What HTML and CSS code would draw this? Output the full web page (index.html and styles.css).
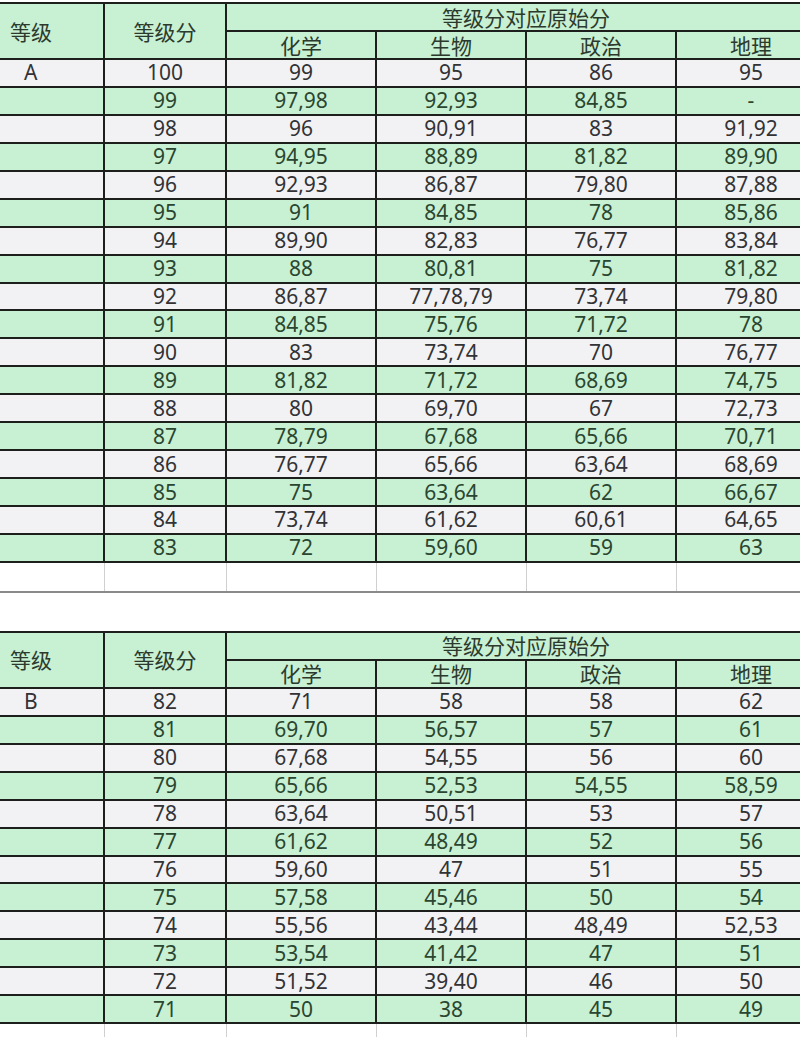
FILE: index.html
```html
<!DOCTYPE html>
<html lang="zh-CN">
<head>
<meta charset="utf-8">
<title>等级分对应原始分</title>
<link rel="stylesheet" href="styles.css">
</head>
<body>
<div class="page">
<table class="grade grade-a">
  <colgroup>
    <col class="c1"><col class="c2"><col class="c3"><col class="c3"><col class="c3"><col class="c3">
  </colgroup>
  <thead>
    <tr class="h1">
      <th rowspan="2" class="lvl">等级</th>
      <th rowspan="2">等级分</th>
      <th colspan="4">等级分对应原始分</th>
    </tr>
    <tr class="h2">
      <th>化学</th><th>生物</th><th>政治</th><th>地理</th>
    </tr>
  </thead>
  <tbody>
    <tr class="w"><td class="lvl">A</td><td>100</td><td>99</td><td>95</td><td>86</td><td>95</td></tr>
    <tr class="g"><td class="lvl"></td><td>99</td><td>97,98</td><td>92,93</td><td>84,85</td><td>-</td></tr>
    <tr class="w"><td class="lvl"></td><td>98</td><td>96</td><td>90,91</td><td>83</td><td>91,92</td></tr>
    <tr class="g"><td class="lvl"></td><td>97</td><td>94,95</td><td>88,89</td><td>81,82</td><td>89,90</td></tr>
    <tr class="w"><td class="lvl"></td><td>96</td><td>92,93</td><td>86,87</td><td>79,80</td><td>87,88</td></tr>
    <tr class="g"><td class="lvl"></td><td>95</td><td>91</td><td>84,85</td><td>78</td><td>85,86</td></tr>
    <tr class="w"><td class="lvl"></td><td>94</td><td>89,90</td><td>82,83</td><td>76,77</td><td>83,84</td></tr>
    <tr class="g"><td class="lvl"></td><td>93</td><td>88</td><td>80,81</td><td>75</td><td>81,82</td></tr>
    <tr class="w"><td class="lvl"></td><td>92</td><td>86,87</td><td>77,78,79</td><td>73,74</td><td>79,80</td></tr>
    <tr class="g"><td class="lvl"></td><td>91</td><td>84,85</td><td>75,76</td><td>71,72</td><td>78</td></tr>
    <tr class="w"><td class="lvl"></td><td>90</td><td>83</td><td>73,74</td><td>70</td><td>76,77</td></tr>
    <tr class="g"><td class="lvl"></td><td>89</td><td>81,82</td><td>71,72</td><td>68,69</td><td>74,75</td></tr>
    <tr class="w"><td class="lvl"></td><td>88</td><td>80</td><td>69,70</td><td>67</td><td>72,73</td></tr>
    <tr class="g"><td class="lvl"></td><td>87</td><td>78,79</td><td>67,68</td><td>65,66</td><td>70,71</td></tr>
    <tr class="w"><td class="lvl"></td><td>86</td><td>76,77</td><td>65,66</td><td>63,64</td><td>68,69</td></tr>
    <tr class="g"><td class="lvl"></td><td>85</td><td>75</td><td>63,64</td><td>62</td><td>66,67</td></tr>
    <tr class="w"><td class="lvl"></td><td>84</td><td>73,74</td><td>61,62</td><td>60,61</td><td>64,65</td></tr>
    <tr class="g"><td class="lvl"></td><td>83</td><td>72</td><td>59,60</td><td>59</td><td>63</td></tr>
    <tr class="e"><td></td><td></td><td></td><td></td><td></td><td></td></tr>
  </tbody>
</table>

<table class="grade grade-b">
  <colgroup>
    <col class="c1"><col class="c2"><col class="c3"><col class="c3"><col class="c3"><col class="c3">
  </colgroup>
  <thead>
    <tr class="h1">
      <th rowspan="2" class="lvl">等级</th>
      <th rowspan="2">等级分</th>
      <th colspan="4">等级分对应原始分</th>
    </tr>
    <tr class="h2">
      <th>化学</th><th>生物</th><th>政治</th><th>地理</th>
    </tr>
  </thead>
  <tbody>
    <tr class="w"><td class="lvl">B</td><td>82</td><td>71</td><td>58</td><td>58</td><td>62</td></tr>
    <tr class="g"><td class="lvl"></td><td>81</td><td>69,70</td><td>56,57</td><td>57</td><td>61</td></tr>
    <tr class="w"><td class="lvl"></td><td>80</td><td>67,68</td><td>54,55</td><td>56</td><td>60</td></tr>
    <tr class="g"><td class="lvl"></td><td>79</td><td>65,66</td><td>52,53</td><td>54,55</td><td>58,59</td></tr>
    <tr class="w"><td class="lvl"></td><td>78</td><td>63,64</td><td>50,51</td><td>53</td><td>57</td></tr>
    <tr class="g"><td class="lvl"></td><td>77</td><td>61,62</td><td>48,49</td><td>52</td><td>56</td></tr>
    <tr class="w"><td class="lvl"></td><td>76</td><td>59,60</td><td>47</td><td>51</td><td>55</td></tr>
    <tr class="g"><td class="lvl"></td><td>75</td><td>57,58</td><td>45,46</td><td>50</td><td>54</td></tr>
    <tr class="w"><td class="lvl"></td><td>74</td><td>55,56</td><td>43,44</td><td>48,49</td><td>52,53</td></tr>
    <tr class="g"><td class="lvl"></td><td>73</td><td>53,54</td><td>41,42</td><td>47</td><td>51</td></tr>
    <tr class="w"><td class="lvl"></td><td>72</td><td>51,52</td><td>39,40</td><td>46</td><td>50</td></tr>
    <tr class="g"><td class="lvl"></td><td>71</td><td>50</td><td>38</td><td>45</td><td>49</td></tr>
    <tr class="e"><td></td><td></td><td></td><td></td><td></td><td></td></tr>
  </tbody>
</table>
</div>
</body>
</html>
```

FILE: styles.css
```css
html, body {
  margin: 0;
  padding: 0;
  background: #ffffff;
  overflow: hidden;
}

.page {
  width: 826px;
  padding-top: 2px;
}

.grade {
  border-collapse: collapse;
  table-layout: fixed;
  width: 826px;
  margin-left: -2px;
  font-family: "Noto Sans", "Noto Sans CJK SC", sans-serif;
  font-size: 21px;
  line-height: 1;
}

.grade-b {
  margin-top: 38px;
}

.c1 { width: 105px; }
.c2 { width: 122px; }
.c3 { width: 150px; }

.grade th,
.grade td {
  border: 2px solid #1c1f1c;
  padding: 0;
  text-align: center;
  vertical-align: middle;
  white-space: nowrap;
  overflow: hidden;
}

.grade th {
  background: #c8f0d2;
  color: #2c3a2e;
  font-weight: normal;
  font-family: "Noto Sans CJK SC", sans-serif;
  font-size: 21px;
}

.grade .h1 { height: 28px; }
.grade .h2 { height: 28px; }

.grade th.lvl {
  text-align: left;
  padding-left: 10px;
}

.grade td.lvl {
  text-align: left;
  padding-left: 24px;
}

.grade tbody tr { height: 27.95px; }

.grade tr.w td {
  background: #f2f2f4;
  color: #333336;
}

.grade tr.g td {
  background: #c8f0d2;
  color: #2a4630;
}

.grade tr.e { height: 30px; }

.grade tr.e td {
  background: #ffffff;
  border: 1px solid #d0d0d0;
  border-bottom: 2px solid #8a8a8a;
}

.grade-b tr.e td {
  border-bottom: none;
}
```
